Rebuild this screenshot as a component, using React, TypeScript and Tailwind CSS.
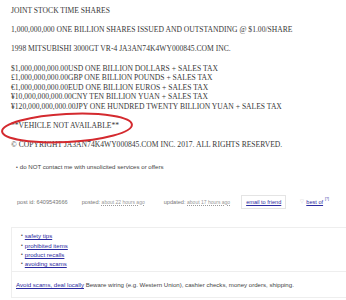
export default function App() {
  return (
    <div className="relative w-[346px] h-[300px] overflow-hidden bg-white">
      {/* posting body */}
      <div className="pl-[11px] pt-[6px] font-['Liberation_Serif',serif] text-[7.6px] leading-[9.6px] text-[#383838] whitespace-nowrap">
        JOINT STOCK TIME SHARES<br />
        <br />
        1,000,000,000 ONE BILLION SHARES ISSUED AND OUTSTANDING @ $1.00/SHARE<br />
        <br />
        1998 MITSUBISHI 3000GT VR-4 JA3AN74K4WY000845.COM INC.<br />
        <br />
        $1,000,000,000.00USD ONE BILLION DOLLARS + SALES TAX<br />
        £1,000,000,000.00GBP ONE BILLION POUNDS + SALES TAX<br />
        €1,000,000,000.00EUD ONE BILLION EUROS + SALES TAX<br />
        ¥10,000,000,000.00CNY TEN BILLION YUAN + SALES TAX<br />
        ¥120,000,000,000.00JPY ONE HUNDRED TWENTY BILLION YUAN + SALES TAX<br />
        <br />
        **VEHICLE NOT AVAILABLE**<br />
        <br />
        © COPYRIGHT JA3AN74K4WY000845.COM INC. 2017. ALL RIGHTS RESERVED.
      </div>

      {/* notices */}
      <ul className="mt-[13px] pl-[16px] font-['Liberation_Sans',sans-serif] text-[6.1px] leading-[8px] text-[#444]">
        <li className="flex items-center gap-[2px]">
          <span className="text-[5px]">•</span>
          <span>do NOT contact me with unsolicited services or offers</span>
        </li>
      </ul>

      {/* post info row */}
      <div className="mt-[24px] pl-[17px] flex items-center font-['Liberation_Sans',sans-serif] text-[5.6px] text-[#777] whitespace-nowrap">
        <span>post id: 6409543666</span>
        <span className="ml-[14px]">
          posted: <span className="text-[5px] text-[#999] underline decoration-dotted">about 22 hours ago</span>
        </span>
        <span className="ml-[19px]">
          updated: <span className="text-[5px] text-[#999] underline decoration-dotted">about 17 hours ago</span>
        </span>
        <span className="ml-[11px] border border-[#e4e4e4] px-[4px] py-[2px] text-[#2a2aa0] underline">email to friend</span>
        <span className="ml-[14px] flex items-center gap-[2px]">
          <span className="text-[5px] text-[#ccc]">▽</span>
          <span className="text-[#2a2aa0] underline">best of</span>
          <sup className="text-[3.5px] text-[#2a2aa0] -mt-[2px]">[?]</sup>
        </span>
      </div>

      {/* safety panel */}
      <div className="mt-[18px] ml-[11px] border border-r-0 border-[#eee] font-['Liberation_Sans',sans-serif] text-[6.1px] text-[#444]">
        <ul className="pl-[9px] pt-[3px] pb-[3px] leading-[9.3px]">
          {['safety tips', 'prohibited items', 'product recalls', 'avoiding scams'].map((t) => (
            <li key={t} className="flex items-center gap-[2px]">
              <span className="text-[5px]">•</span>
              <span className="text-[#2a2aa0] underline">{t}</span>
            </li>
          ))}
        </ul>
        <div className="border-t border-[#eee] pl-[4px] pt-[9px] pb-[8px] leading-[8px] whitespace-nowrap">
          <span className="text-[#2a2aa0] underline">Avoid scams, deal locally</span> Beware wiring (e.g. Western Union), cashier checks, money orders, shipping.
        </div>
      </div>

      {/* red circle annotation */}
      <svg className="absolute left-0 top-[108px]" width="140" height="40" viewBox="0 0 140 40">
        <ellipse cx="67" cy="20" rx="65" ry="14" fill="none" stroke="#d42a2f" strokeWidth="2" transform="rotate(-3 67 20)" />
      </svg>
    </div>
  );
}
